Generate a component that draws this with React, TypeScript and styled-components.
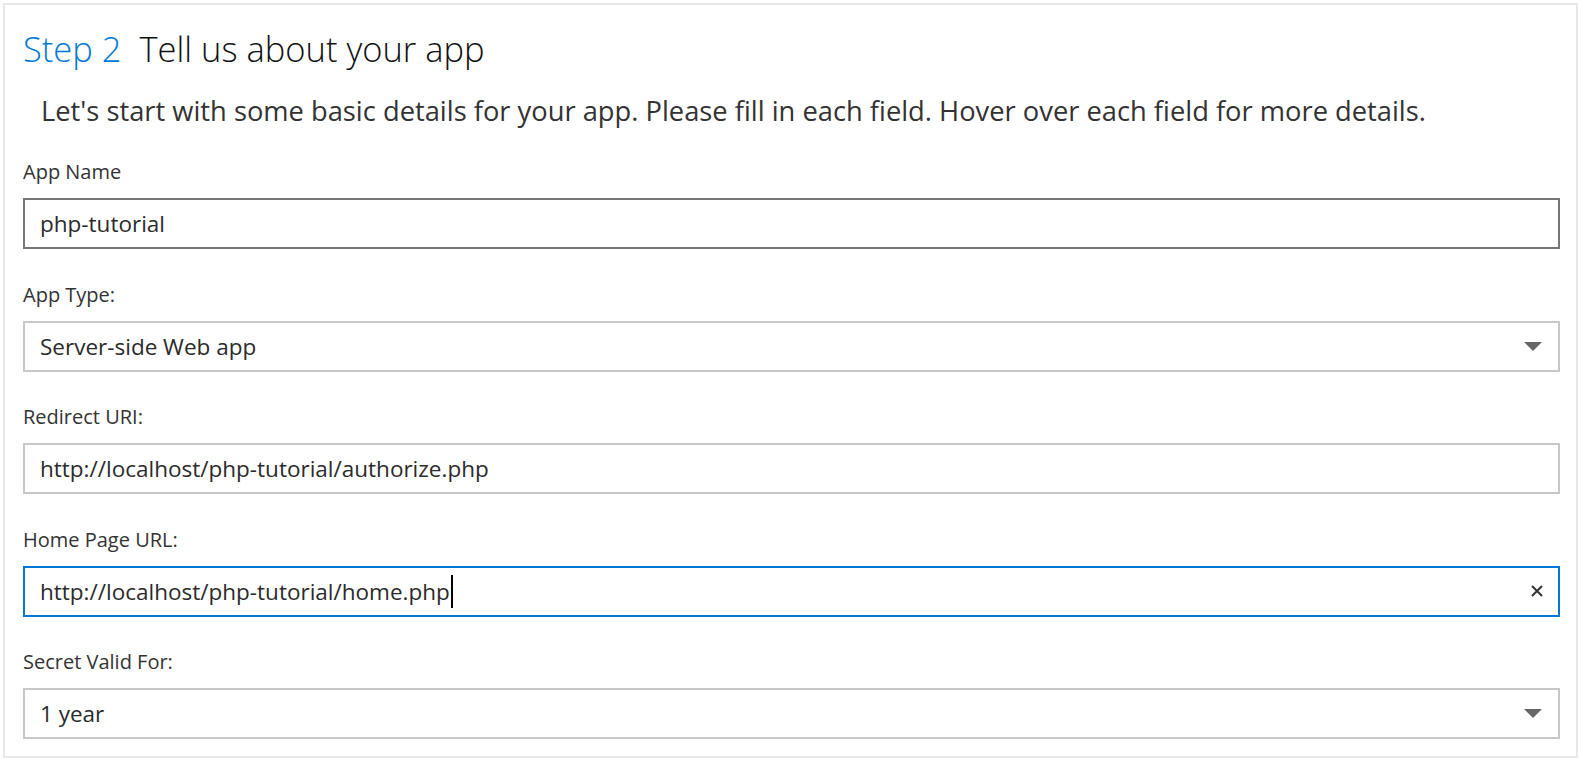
import React from "react";
import styled, { createGlobalStyle } from "styled-components";

const GlobalStyle = createGlobalStyle`
  html, body {
    margin: 0;
    padding: 0;
    background: #fff;
  }
  body {
    font-family: "Open Sans", "Noto Sans", Arial, sans-serif;
    color: #333;
  }
`;

const Page = styled.div`
  padding: 3px 7px 6px 3px;
`;

const Panel = styled.section`
  border: 2px solid #e8e8e8;
  padding: 22px 16px 17px 18px;
`;

const Heading = styled.h1`
  margin: 0;
  font-size: 34.5px;
  font-weight: 300;
  line-height: 44px;
  color: #111;
  display: flex;
  gap: 18px;
`;

const StepNo = styled.span`
  color: #0078d7;
`;

const Intro = styled.p`
  margin: 22px 0 30px 18px;
  font-size: 27.3px;
  line-height: 36px;
  color: #333;
`;

const Field = styled.div`
  margin-bottom: 32.5px;

  &:last-child {
    margin-bottom: 0;
  }
`;

const Label = styled.div`
  font-size: 20px;
  line-height: 26px;
  color: #333;
  margin-bottom: 13px;
`;

type BoxState = "idle" | "hover" | "focus";

const borderColors: Record<BoxState, string> = {
  idle: "#c8c8c8",
  hover: "#767676",
  focus: "#0078d7",
};

const Box = styled.div<{ $state?: BoxState }>`
  height: 51px;
  box-sizing: border-box;
  border: 2px solid ${(p) => borderColors[p.$state || "idle"]};
  display: flex;
  align-items: center;
  padding: 0 14px 0 15px;
  font-size: 22.5px;
  color: #2b2b2b;
`;

const Value = styled.span`
  flex: 1;
  display: flex;
  align-items: center;
  white-space: nowrap;
`;

const Caret = styled.span`
  display: inline-block;
  width: 2px;
  height: 33px;
  background: #000;
  margin-left: 1px;
`;

const Arrow = styled.span`
  width: 0;
  height: 0;
  border-left: 9px solid transparent;
  border-right: 9px solid transparent;
  border-top: 9px solid #666;
  margin-right: 2px;
`;

const ClearButton = styled.span`
  display: flex;
  width: 14px;
  height: 14px;
  color: #333;
`;

function Cross() {
  return (
    <ClearButton>
      <svg width="14" height="14" viewBox="0 0 14 14">
        <path d="M2 2 L12 12 M12 2 L2 12" stroke="#333" strokeWidth="2" />
      </svg>
    </ClearButton>
  );
}

export default function App() {
  return (
    <>
      <GlobalStyle />
      <Page>
        <Panel>
          <Heading>
            <StepNo>Step 2</StepNo>
            <span>Tell us about your app</span>
          </Heading>
          <Intro>
            Let's start with some basic details for your app. Please fill in each field. Hover over
            each field for more details.
          </Intro>

          <Field>
            <Label>App Name</Label>
            <Box $state="hover">
              <Value>php-tutorial</Value>
            </Box>
          </Field>

          <Field>
            <Label>App Type:</Label>
            <Box>
              <Value>Server-side Web app</Value>
              <Arrow />
            </Box>
          </Field>

          <Field>
            <Label>Redirect URI:</Label>
            <Box>
              <Value>http://localhost/php-tutorial/authorize.php</Value>
            </Box>
          </Field>

          <Field>
            <Label>Home Page URL:</Label>
            <Box $state="focus">
              <Value>
                http://localhost/php-tutorial/home.php
                <Caret />
              </Value>
              <Cross />
            </Box>
          </Field>

          <Field>
            <Label>Secret Valid For:</Label>
            <Box>
              <Value>1 year</Value>
              <Arrow />
            </Box>
          </Field>
        </Panel>
      </Page>
    </>
  );
}
